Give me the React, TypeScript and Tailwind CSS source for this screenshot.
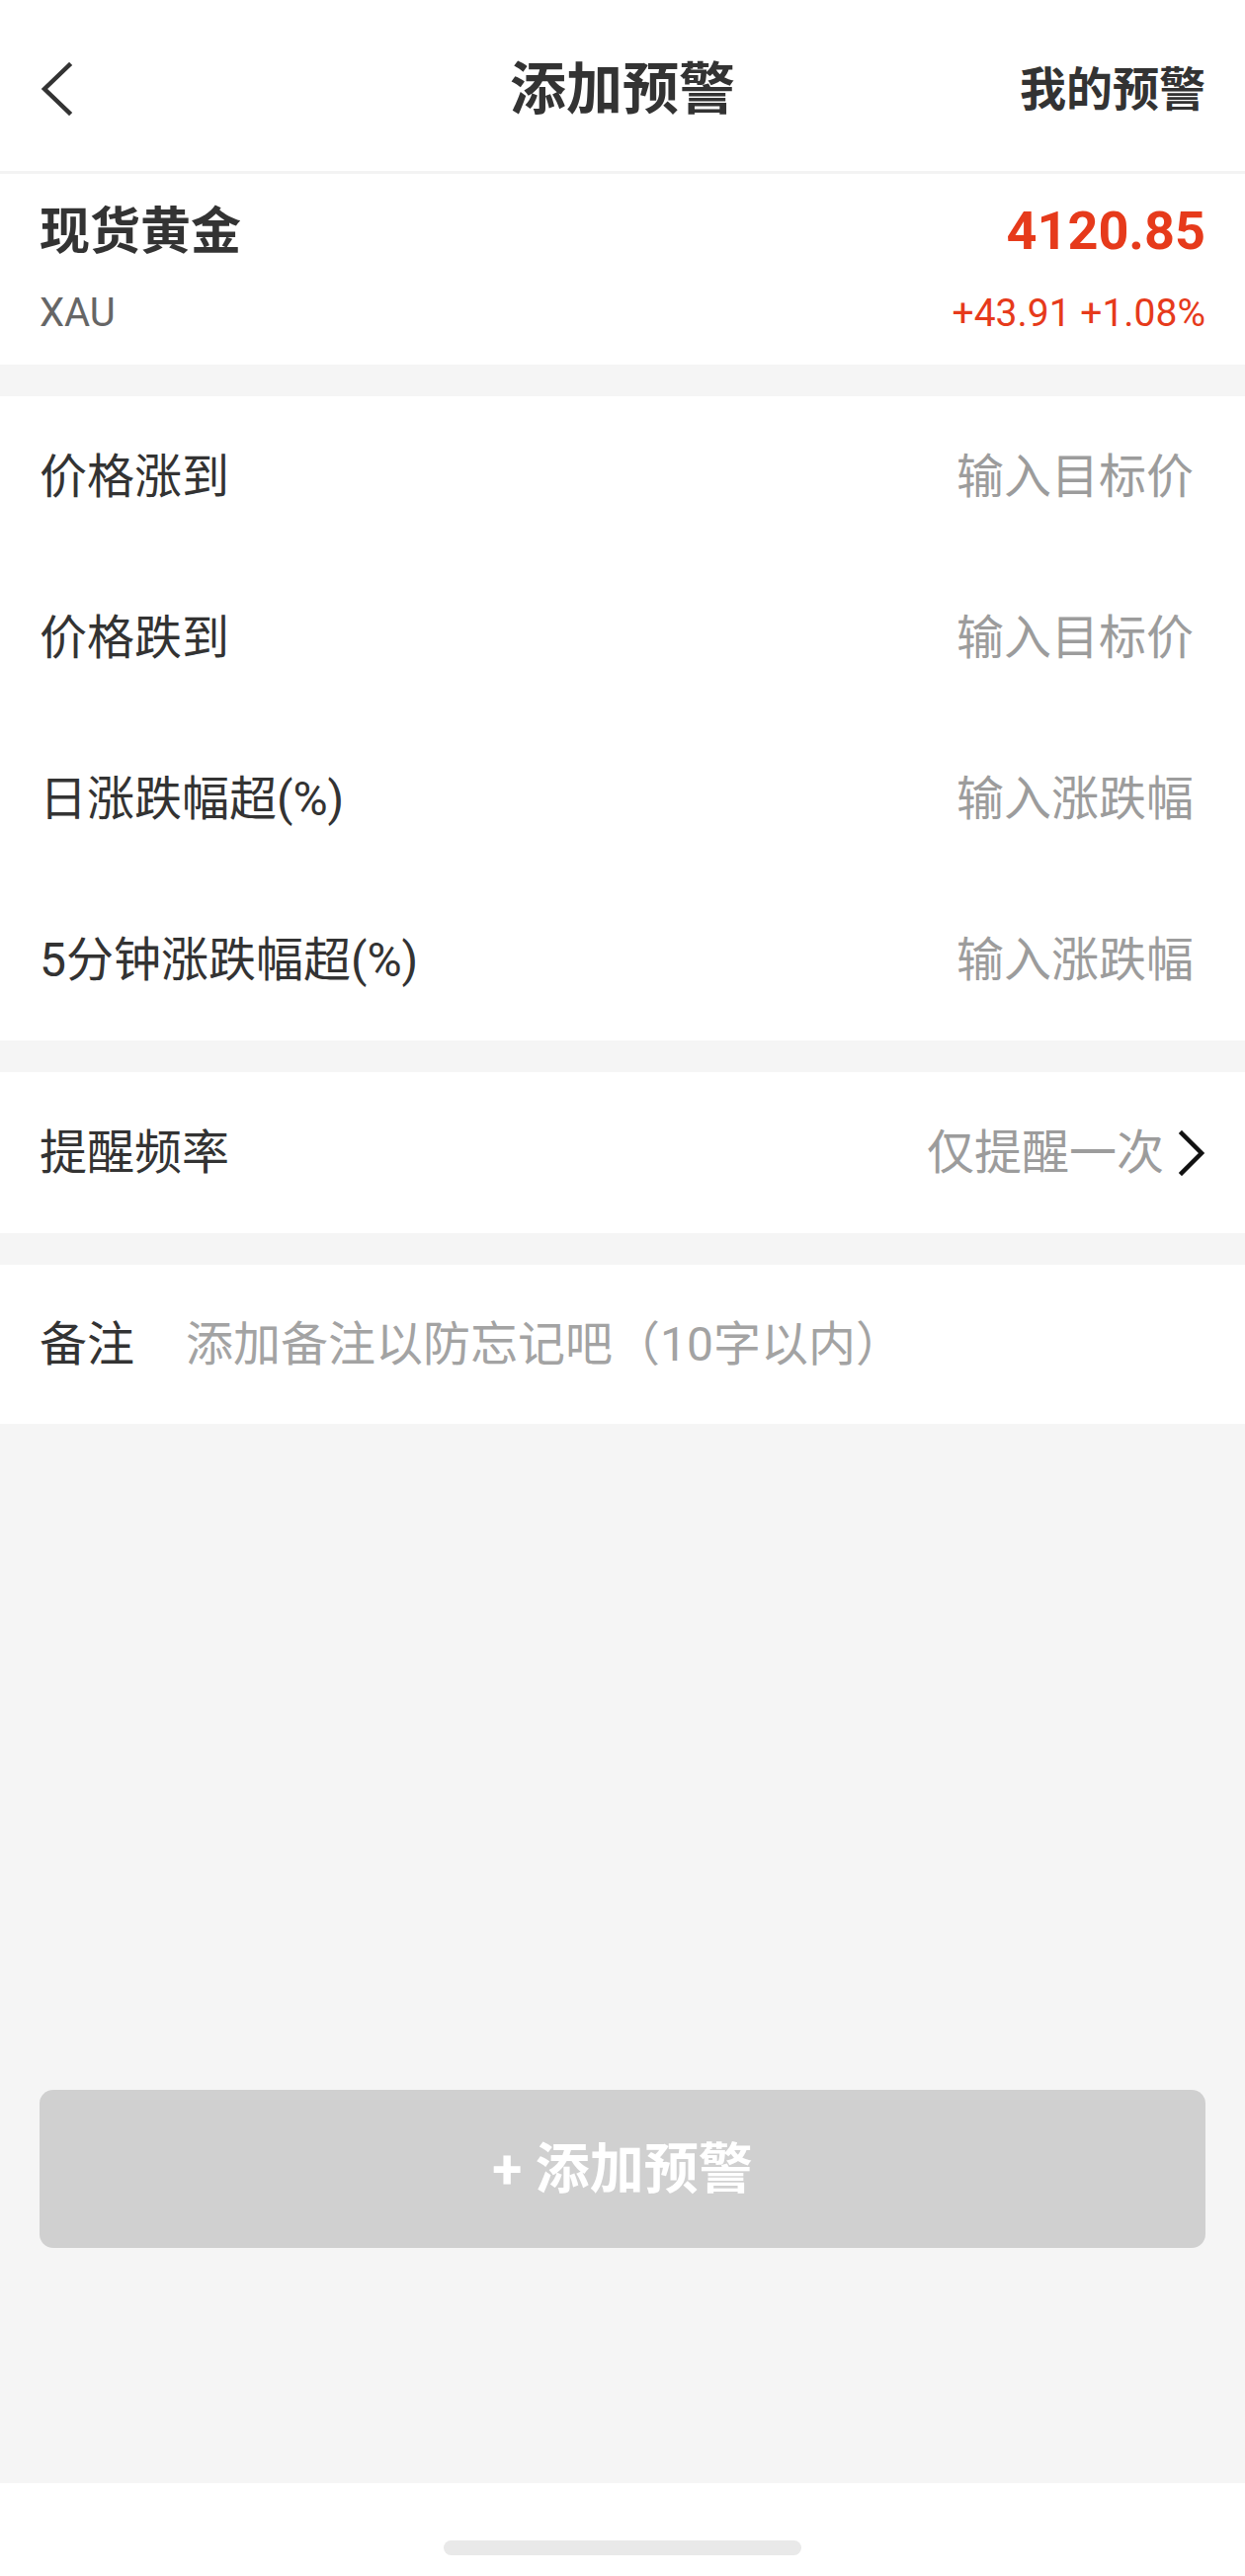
import React from "react";

const ALERT_ROWS = [
  { label: "价格涨到", placeholder: "输入目标价" },
  { label: "价格跌到", placeholder: "输入目标价" },
  { label: "日涨跌幅超(%)", placeholder: "输入涨跌幅" },
  { label: "5分钟涨跌幅超(%)", placeholder: "输入涨跌幅" },
];

function BackIcon() {
  return (
    <svg width="34" height="54" viewBox="0 0 34 54" fill="none">
      <polyline points="30,3 5,27 30,51" stroke="#333333" strokeWidth="4.5" strokeLinecap="square" strokeLinejoin="miter" />
    </svg>
  );
}

function ChevronRight() {
  return (
    <svg width="28" height="46" viewBox="0 0 28 46" fill="none">
      <polyline points="4,3 24,23 4,43" stroke="#111111" strokeWidth="4.5" strokeLinecap="square" strokeLinejoin="miter" />
    </svg>
  );
}

export default function App() {
  return (
    <div
      className="w-[1260px] min-h-[2607px] flex flex-col bg-[#f5f5f5] text-[#333]"
      style={{ fontFamily: 'Roboto, "Noto Sans CJK SC", sans-serif' }}
    >
      {/* Header */}
      <header className="h-[176px] bg-white border-b-[3px] border-[#f3f3f3] px-[40px] pt-[7px] grid grid-cols-[1fr_auto_1fr] items-center">
        <div className="flex items-center">
          <BackIcon />
        </div>
        <h1 className="text-[57px] font-bold leading-none text-[#333]">添加预警</h1>
        <div className="flex justify-end">
          <span className="text-[47px] font-bold leading-none text-[#333]">我的预警</span>
        </div>
      </header>

      {/* Quote */}
      <section className="bg-white px-[40px] pt-[30px] pb-[32px]">
        <div className="flex items-center justify-between h-[56px]">
          <span className="text-[51px] font-bold leading-none text-[#333]">现货黄金</span>
          <span className="text-[54px] font-bold leading-none text-[#e63a1b]">4120.85</span>
        </div>
        <div className="flex items-center justify-between h-[40px] mt-[35px]">
          <span className="text-[40px] leading-none text-[#666]">XAU</span>
          <span className="text-[39px] leading-none text-[#e63a1b]">+43.91 +1.08%</span>
        </div>
      </section>

      {/* Conditions */}
      <section className="bg-white mt-[32px]">
        {ALERT_ROWS.map((row) => (
          <div key={row.label} className="h-[163px] px-[40px] flex items-center justify-between">
            <span className="text-[48px] leading-none text-[#333] whitespace-nowrap">{row.label}</span>
            <input
              className="w-[500px] mr-[12px] text-right text-[48px] leading-none bg-transparent outline-none placeholder:text-[#9c9c9c]"
              placeholder={row.placeholder}
            />
          </div>
        ))}
      </section>

      {/* Frequency */}
      <section className="bg-white mt-[32px] h-[163px] px-[40px] flex items-center justify-between">
        <span className="text-[48px] leading-none text-[#333]">提醒频率</span>
        <div className="flex items-center gap-[14px]">
          <span className="text-[48px] leading-none text-[#9c9c9c]">仅提醒一次</span>
          <ChevronRight />
        </div>
      </section>

      {/* Note */}
      <section className="bg-white mt-[32px] h-[161px] px-[40px] flex items-center">
        <span className="text-[48px] leading-none text-[#333] whitespace-nowrap">备注</span>
        <input
          className="flex-1 ml-[52px] text-[48px] leading-none bg-transparent outline-none placeholder:text-[#a3a3a3]"
          placeholder="添加备注以防忘记吧（10字以内）"
        />
      </section>

      {/* Submit */}
      <div className="flex-1 px-[40px] pt-[674px]">
        <button className="w-full h-[160px] rounded-[14px] bg-[#d0d0d0] text-white text-[55px] font-bold flex items-center justify-center">
          + 添加预警
        </button>
      </div>

      {/* Home indicator */}
      <div className="h-[94px] bg-white flex justify-center pt-[58px]">
        <div className="w-[362px] h-[15px] rounded-full bg-[#e9e9e9]" />
      </div>
    </div>
  );
}
